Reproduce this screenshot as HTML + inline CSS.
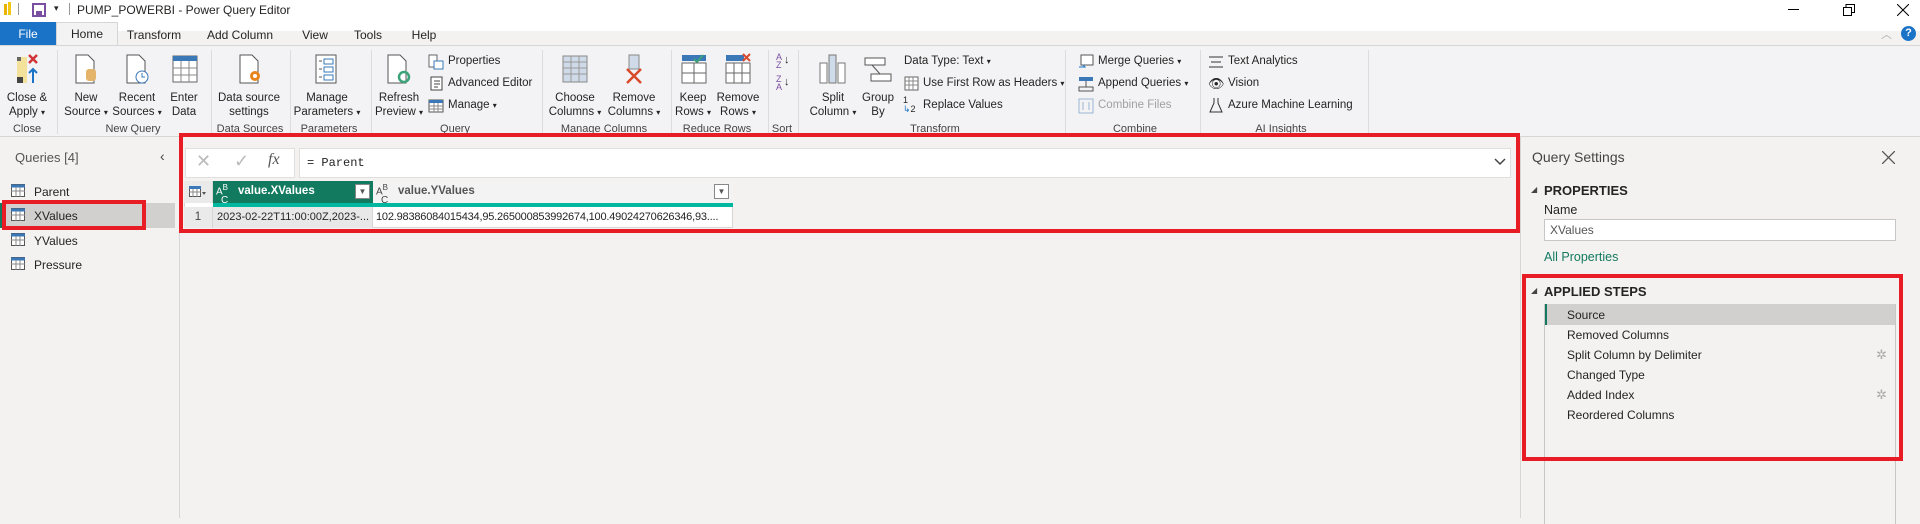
<!DOCTYPE html>
<html><head><meta charset="utf-8"><style>
*{margin:0;padding:0;box-sizing:border-box}
body{width:1920px;height:518px;overflow:hidden;background:#f3f2f1;font-family:"Liberation Sans",sans-serif;font-size:11.5px;color:#252423;position:relative}
.a{position:absolute;white-space:nowrap}
.c{position:absolute;white-space:nowrap;transform:translateX(-50%);text-align:center;line-height:12px}
.gl{position:absolute;top:123px;transform:translateX(-50%);white-space:nowrap;color:#444;font-size:11px}
.sep{position:absolute;top:50px;width:1px;height:84px;background:#dcdcdc}
.red{position:absolute;border:4px solid #e81c24}
.dd{font-size:8px}
.ico{position:absolute}
</style></head><body>
<div class="a" style="left:0;top:0;width:1920px;height:31px;background:#fff"></div>
<div class="a" style="left:4px;top:4px;width:3px;height:11px;background:#e8b400"></div>
<div class="a" style="left:8px;top:2px;width:3px;height:13px;background:#f2c811"></div>
<div class="a" style="left:18px;top:3px;width:1px;height:12px;background:#999"></div>
<svg class="ico" style="left:32px;top:3px" width="14" height="14"><rect x="1" y="1" width="12" height="12" fill="none" stroke="#7a4ea0" stroke-width="2"/><rect x="4" y="8" width="6" height="5" fill="#7a4ea0"/></svg>
<div class="a" style="left:54px;top:3px;font-size:9px">▾</div>
<div class="a" style="left:69px;top:3px;width:1px;height:12px;background:#999"></div>
<div class="a" style="left:77px;top:3px;font-size:12px">PUMP_POWERBI - Power Query Editor</div>
<div class="a" style="left:1788px;top:9px;width:11px;height:1px;background:#000"></div>
<svg class="ico" style="left:1843px;top:4px" width="12" height="12"><rect x="0.5" y="3.5" width="8" height="8" fill="none" stroke="#000"/><path d="M3 3.5V0.5H11.5V8.5H8.5" fill="none" stroke="#000"/></svg>
<svg class="ico" style="left:1897px;top:4px" width="12" height="12"><path d="M0 0L12 12M12 0L0 12" stroke="#000"/></svg>
<div class="a" style="left:0;top:22px;width:56px;height:24px;background:#1a73c6;color:#fff;text-align:center;line-height:24px;font-size:12px">File</div>
<div class="a" style="left:56px;top:22px;width:62px;height:24px;background:#f3f3f3;border:1px solid #d6d6d6;border-bottom:none;text-align:center;line-height:22px;font-size:12px">Home</div>
<div class="c" style="left:154px;top:29px;font-size:12px">Transform</div>
<div class="c" style="left:240px;top:29px;font-size:12px">Add Column</div>
<div class="c" style="left:315px;top:29px;font-size:12px">View</div>
<div class="c" style="left:368px;top:29px;font-size:12px">Tools</div>
<div class="c" style="left:424px;top:29px;font-size:12px">Help</div>
<div class="a" style="left:1881px;top:26px;color:#aaa;font-size:11px">︿</div>
<div class="a" style="left:1901px;top:26px;width:15px;height:15px;border-radius:50%;background:#1a73c6;color:#fff;font-size:11px;font-weight:bold;text-align:center;line-height:15px">?</div>
<div class="a" style="left:0;top:45px;width:1920px;height:92px;background:#f3f3f5;border-top:1px solid #d6d6d6;border-bottom:1px solid #d6d6d6"></div>
<div class="sep" style="left:57px"></div><div class="sep" style="left:211px"></div><div class="sep" style="left:290px"></div><div class="sep" style="left:371px"></div><div class="sep" style="left:542px"></div><div class="sep" style="left:671px"></div><div class="sep" style="left:768px"></div><div class="sep" style="left:798px"></div><div class="sep" style="left:1065px"></div><div class="sep" style="left:1200px"></div><div class="sep" style="left:1368px"></div>
<svg class="ico" style="left:15px;top:53px" width="26" height="32"><rect x="2" y="4" width="10" height="26" fill="#f5e29a"/><rect x="2" y="4" width="4" height="4" fill="#666"/><rect x="2" y="24" width="6" height="6" fill="#444"/><path d="M14 2l8 8M22 2l-8 8" stroke="#d13438" stroke-width="2.5"/><path d="M18 30V16M14 20l4-4 4 4" stroke="#1a73c6" stroke-width="2" fill="none"/></svg>
<svg class="ico" style="left:74px;top:53px" width="26" height="32"><path d="M2 2h12l6 6v22H2z" fill="#fff" stroke="#555"/><rect x="12" y="16" width="10" height="12" rx="3" fill="#e3b469"/></svg>
<svg class="ico" style="left:125px;top:53px" width="26" height="32"><path d="M2 2h12l6 6v22H2z" fill="#fff" stroke="#555"/><circle cx="17" cy="24" r="6" fill="#fff" stroke="#3a78b8"/><path d="M17 20v4h3" stroke="#3a78b8" fill="none"/></svg>
<svg class="ico" style="left:172px;top:55px" width="26" height="28"><rect x="1" y="1" width="24" height="26" fill="#fff" stroke="#666"/><rect x="1" y="1" width="24" height="5" fill="#3a78b8"/><path d="M1 13h24M1 20h24M9 6v21M17 6v21" stroke="#888"/></svg>
<svg class="ico" style="left:238px;top:53px" width="26" height="32"><path d="M2 2h12l6 6v22H2z" fill="#fff" stroke="#555"/><circle cx="17" cy="23" r="5" fill="#e8841c"/><circle cx="17" cy="23" r="2" fill="#fff"/></svg>
<svg class="ico" style="left:314px;top:53px" width="26" height="32"><rect x="2" y="2" width="20" height="28" fill="#fff" stroke="#555"/><rect x="10" y="6" width="9" height="5" fill="none" stroke="#3a78b8"/><rect x="10" y="14" width="9" height="5" fill="none" stroke="#3a78b8"/><rect x="10" y="22" width="9" height="5" fill="none" stroke="#3a78b8"/><path d="M5 8h3M5 16h3M5 24h3" stroke="#555"/></svg>
<svg class="ico" style="left:386px;top:53px" width="26" height="32"><path d="M2 2h12l6 6v22H2z" fill="#fff" stroke="#555"/><circle cx="18" cy="24" r="5" fill="none" stroke="#3aa37a" stroke-width="2.5"/></svg>
<svg class="ico" style="left:562px;top:55px" width="26" height="28"><rect x="1" y="1" width="24" height="26" fill="#cfdbe8" stroke="#888"/><path d="M1 7h24M1 13h24M1 19h24M9 1v26M17 1v26" stroke="#999"/></svg>
<svg class="ico" style="left:621px;top:53px" width="26" height="32"><rect x="8" y="2" width="10" height="14" fill="#cfdbe8" stroke="#888"/><path d="M6 16l14 14M20 16L6 30" stroke="#d84a2b" stroke-width="2.5"/></svg>
<svg class="ico" style="left:680px;top:53px" width="28" height="32"><rect x="2" y="2" width="24" height="6" fill="#3a78b8"/><path d="M14 6l3 3 6-7" stroke="#3aa37a" stroke-width="2" fill="none"/><rect x="2" y="10" width="24" height="20" fill="#fff" stroke="#666"/><path d="M2 20h24M14 10v20" stroke="#666"/></svg>
<svg class="ico" style="left:724px;top:53px" width="28" height="32"><rect x="2" y="2" width="18" height="6" fill="#3a78b8"/><path d="M19 1l7 7M26 1l-7 7" stroke="#d84a2b" stroke-width="2"/><rect x="2" y="10" width="24" height="20" fill="#fff" stroke="#666"/><path d="M2 20h24M10 10v20M18 10v20" stroke="#666"/></svg>
<div class="a" style="left:776px;top:53px;font-size:9px;line-height:8px;color:#7a4ea0">A<br>Z</div><div class="a" style="left:784px;top:54px;font-size:11px">↓</div>
<div class="a" style="left:776px;top:75px;font-size:9px;line-height:8px;color:#7a4ea0">Z<br>A</div><div class="a" style="left:784px;top:76px;font-size:11px">↓</div>
<svg class="ico" style="left:818px;top:53px" width="30" height="32"><rect x="2" y="10" width="7" height="20" fill="#fff" stroke="#777"/><rect x="11" y="2" width="7" height="28" fill="#cfdbe8" stroke="#777"/><rect x="20" y="10" width="7" height="20" fill="#fff" stroke="#777"/></svg>
<svg class="ico" style="left:864px;top:57px" width="28" height="28"><rect x="1" y="1" width="20" height="7" fill="#fff" stroke="#555"/><rect x="7" y="17" width="20" height="7" fill="#fff" stroke="#555"/><path d="M8 8l8 9" stroke="#555"/></svg>
<div class="c" style="left:27px;top:91px;line-height:14px">Close &amp;<br>Apply <span class="dd">▾</span></div>
<div class="c" style="left:86px;top:91px;line-height:14px">New<br>Source <span class="dd">▾</span></div>
<div class="c" style="left:137px;top:91px;line-height:14px">Recent<br>Sources <span class="dd">▾</span></div>
<div class="c" style="left:184px;top:91px;line-height:14px">Enter<br>Data</div>
<div class="c" style="left:249px;top:91px;line-height:14px">Data source<br>settings</div>
<div class="c" style="left:327px;top:91px;line-height:14px">Manage<br>Parameters <span class="dd">▾</span></div>
<div class="c" style="left:399px;top:91px;line-height:14px">Refresh<br>Preview <span class="dd">▾</span></div>
<div class="c" style="left:575px;top:91px;line-height:14px">Choose<br>Columns <span class="dd">▾</span></div>
<div class="c" style="left:634px;top:91px;line-height:14px">Remove<br>Columns <span class="dd">▾</span></div>
<div class="c" style="left:693px;top:91px;line-height:14px">Keep<br>Rows <span class="dd">▾</span></div>
<div class="c" style="left:738px;top:91px;line-height:14px">Remove<br>Rows <span class="dd">▾</span></div>
<div class="c" style="left:833px;top:91px;line-height:14px">Split<br>Column <span class="dd">▾</span></div>
<div class="c" style="left:878px;top:91px;line-height:14px">Group<br>By</div>
<svg class="ico" style="left:428px;top:54px" width="16" height="16"><rect x="1" y="1" width="8" height="12" fill="#fff" stroke="#666"/><rect x="6" y="7" width="9" height="8" fill="#fff" stroke="#3a78b8"/></svg>
<div class="a" style="left:448px;top:55px">Properties</div>
<svg class="ico" style="left:428px;top:76px" width="16" height="16"><rect x="3" y="1" width="11" height="13" fill="#fff" stroke="#444"/><path d="M6 5h6M6 8h6M6 11h4" stroke="#444"/></svg>
<div class="a" style="left:448px;top:77px">Advanced Editor</div>
<svg class="ico" style="left:428px;top:98px" width="16" height="16"><rect x="1" y="2" width="14" height="12" fill="#fff" stroke="#555"/><rect x="1" y="2" width="14" height="3" fill="#3a78b8"/><path d="M1 8h14M1 11h14M6 5v9M10 5v9" stroke="#888"/></svg>
<div class="a" style="left:448px;top:99px">Manage <span class="dd">▾</span></div>
<div class="a" style="left:904px;top:55px">Data Type: Text <span class="dd">▾</span></div>
<svg class="ico" style="left:904px;top:76px" width="15" height="15"><rect x="1" y="1" width="13" height="13" fill="#fff" stroke="#666"/><path d="M1 5h13M1 9h13M5 1v13M9 1v13" stroke="#888"/></svg>
<div class="a" style="left:923px;top:77px">Use First Row as Headers <span class="dd">▾</span></div>
<div class="a" style="left:903px;top:96px;font-size:9px;line-height:9px">1<br><span style="color:#1a73c6">↳</span>2</div>
<div class="a" style="left:923px;top:99px">Replace Values</div>
<svg class="ico" style="left:1078px;top:54px" width="16" height="16"><rect x="3" y="1" width="12" height="10" fill="#fff" stroke="#555"/><path d="M1 13h6l-2-2" stroke="#1a73c6" fill="none"/></svg>
<div class="a" style="left:1098px;top:55px">Merge Queries <span class="dd">▾</span></div>
<svg class="ico" style="left:1078px;top:76px" width="16" height="16"><rect x="1" y="1" width="14" height="4" fill="#3a78b8"/><rect x="1" y="11" width="14" height="4" fill="none" stroke="#555"/><path d="M8 5v6" stroke="#555"/></svg>
<div class="a" style="left:1098px;top:77px">Append Queries <span class="dd">▾</span></div>
<svg class="ico" style="left:1078px;top:98px" width="16" height="16"><rect x="1" y="1" width="14" height="14" fill="none" stroke="#9bb6d1"/><path d="M5 4v8M11 4v8" stroke="#9bb6d1"/></svg>
<div class="a" style="left:1098px;top:99px;color:#a0a0a0">Combine Files</div>
<svg class="ico" style="left:1209px;top:55px" width="14" height="14"><path d="M0 2h14M2 7h10M0 12h14" stroke="#333"/></svg>
<div class="a" style="left:1228px;top:55px">Text Analytics</div>
<div class="a" style="left:1208px;top:76px;font-size:13px">👁</div>
<div class="a" style="left:1228px;top:77px">Vision</div>
<svg class="ico" style="left:1209px;top:97px" width="14" height="16"><path d="M5 1v5L1 15h12L9 6V1" fill="none" stroke="#333"/></svg>
<div class="a" style="left:1228px;top:99px">Azure Machine Learning</div>
<div class="gl" style="left:27px">Close</div><div class="gl" style="left:133px">New Query</div><div class="gl" style="left:250px">Data Sources</div><div class="gl" style="left:329px">Parameters</div><div class="gl" style="left:455px">Query</div><div class="gl" style="left:604px">Manage Columns</div><div class="gl" style="left:717px">Reduce Rows</div><div class="gl" style="left:782px">Sort</div><div class="gl" style="left:935px">Transform</div><div class="gl" style="left:1135px">Combine</div><div class="gl" style="left:1281px">AI Insights</div>
<div class="a" style="left:179px;top:137px;width:1px;height:381px;background:#d6d6d6"></div>
<div class="a" style="left:15px;top:150px;font-size:13px;color:#555">Queries [4]</div>
<div class="a" style="left:160px;top:148px;font-size:14px;color:#444">‹</div>
<div class="a" style="left:0;top:203px;width:175px;height:25px;background:#d2d0ce;border-left:2px solid #137a5f"></div>
<div class="a" style="left:34px;top:185px;font-size:12px">Parent</div>
<div class="a" style="left:34px;top:209px;font-size:12px">XValues</div>
<div class="a" style="left:34px;top:234px;font-size:12px">YValues</div>
<div class="a" style="left:34px;top:258px;font-size:12px">Pressure</div>
<svg class="ico" style="left:11px;top:184px" width="14" height="90"><g fill="#fff" stroke="#555"><rect x="0.5" y="0.5" width="13" height="12"/><rect x="0.5" y="24.5" width="13" height="12"/><rect x="0.5" y="49.5" width="13" height="12"/><rect x="0.5" y="73.5" width="13" height="12"/></g><g stroke="#3a78b8" stroke-width="3"><path d="M0 2h14M0 26h14M0 51h14M0 75h14"/></g><g stroke="#888"><path d="M0 7h14M5 3v10M9 3v10M0 31h14M5 27v10M9 27v10M0 56h14M5 52v10M9 52v10M0 80h14M5 76v10M9 76v10"/></g></svg>
<div class="red" style="left:2px;top:200px;width:144px;height:30px"></div>
<div class="a" style="left:185px;top:148px;width:110px;height:30px;background:#fff;border:1px solid #e1dfdd"></div>
<div class="a" style="left:196px;top:151px;font-size:18px;color:#bbb">✕</div>
<div class="a" style="left:234px;top:151px;font-size:18px;color:#bbb">✓</div>
<div class="a" style="left:268px;top:151px;font-family:'Liberation Serif',serif;font-style:italic;font-size:16px;color:#555">fx</div>
<div class="a" style="left:299px;top:148px;width:1212px;height:30px;background:#fff;border:1px solid #e1dfdd"></div>
<div class="a" style="left:307px;top:156px;font-family:'Liberation Mono',monospace;font-size:12px">= Parent</div>
<svg class="ico" style="left:1494px;top:158px" width="12" height="8"><path d="M1 1l5 5 5-5" stroke="#444" fill="none" stroke-width="1.5"/></svg>
<div class="a" style="left:184px;top:181px;width:549px;height:47px;background:#fff;border:1px solid #d6d6d6"></div>
<div class="a" style="left:184px;top:181px;width:29px;height:22px;background:#eaeaea;border-right:1px solid #d6d6d6"></div>
<svg class="ico" style="left:189px;top:186px" width="18" height="12"><rect x="0.5" y="0.5" width="11" height="10" fill="#fff" stroke="#555"/><rect x="0" y="0" width="12" height="3" fill="#3a78b8"/><path d="M0 6h12M4 3v8M8 3v8" stroke="#888"/><path d="M13 6h4l-2 3z" fill="#555"/></svg>
<div class="a" style="left:213px;top:181px;width:160px;height:22px;background:#127a5f"></div>
<div class="a" style="left:216px;top:183px;color:#fff;font-size:10px;line-height:9px">A<sup style="font-size:8px">B</sup><br><span style="margin-left:5px">C</span></div>
<div class="a" style="left:238px;top:185px;color:#fff;font-weight:bold;font-size:11.5px">value.XValues</div>
<div class="a" style="left:355px;top:184px;width:15px;height:15px;background:#fff;border:1px solid #888;font-size:8px;text-align:center;line-height:14px;color:#555">▼</div>
<div class="a" style="left:373px;top:181px;width:360px;height:22px;background:#f3f3f3"></div>
<div class="a" style="left:376px;top:183px;color:#444;font-size:10px;line-height:9px">A<sup style="font-size:8px">B</sup><br><span style="margin-left:5px">C</span></div>
<div class="a" style="left:398px;top:185px;color:#555;font-weight:bold;font-size:11.5px">value.YValues</div>
<div class="a" style="left:714px;top:184px;width:15px;height:15px;background:#fff;border:1px solid #888;font-size:8px;text-align:center;line-height:14px;color:#555">▼</div>
<div class="a" style="left:213px;top:203px;width:520px;height:4px;background:#00b7a0"></div>
<div class="a" style="left:184px;top:207px;width:29px;height:21px;background:#eaeaea;border-right:1px solid #d6d6d6;text-align:center;line-height:21px;color:#444">1</div>
<div class="a" style="left:213px;top:207px;width:160px;height:21px;background:#e8e8e8;border-right:1px solid #d6d6d6;padding-left:4px;line-height:21px;font-size:11px;overflow:hidden">2023-02-22T11:00:00Z,2023-...</div>
<div class="a" style="left:376px;top:207px;width:356px;line-height:21px;font-size:11px;overflow:hidden;letter-spacing:-0.2px">102.98386084015434,95.265000853992674,100.49024270626346,93....</div>
<div class="red" style="left:179px;top:133px;width:1341px;height:100px"></div>
<div class="a" style="left:1520px;top:137px;width:1px;height:381px;background:#d6d6d6"></div>
<div class="a" style="left:1532px;top:149px;font-size:14px;color:#444">Query Settings</div>
<svg class="ico" style="left:1882px;top:151px" width="13" height="13"><path d="M0 0L13 13M13 0L0 13" stroke="#555" stroke-width="1.3"/></svg>
<div class="a" style="left:1531px;top:185px;font-size:8px;color:#444">◢</div>
<div class="a" style="left:1544px;top:183px;font-weight:bold;font-size:13px">PROPERTIES</div>
<div class="a" style="left:1544px;top:203px;font-size:12.5px">Name</div>
<div class="a" style="left:1544px;top:219px;width:352px;height:22px;background:#fff;border:1px solid #c8c6c4;padding-left:5px;line-height:20px;color:#555;font-size:12px">XValues</div>
<div class="a" style="left:1544px;top:250px;color:#137a5f;font-size:12.5px">All Properties</div>
<div class="a" style="left:1531px;top:286px;font-size:8px;color:#444">◢</div>
<div class="a" style="left:1544px;top:284px;font-weight:bold;font-size:13px">APPLIED STEPS</div>
<div class="a" style="left:1544px;top:304px;width:352px;height:220px;border:1px solid #c8c6c4;border-bottom:none"></div>
<div class="a" style="left:1545px;top:304px;width:350px;height:21px;background:#d2d0ce;border-left:2px solid #137a5f"></div>
<div class="a" style="left:1567px;top:308px;font-size:12px">Source</div>
<div class="a" style="left:1567px;top:328px;font-size:12px">Removed Columns</div>
<div class="a" style="left:1567px;top:348px;font-size:12px">Split Column by Delimiter</div>
<div class="a" style="left:1567px;top:368px;font-size:12px">Changed Type</div>
<div class="a" style="left:1567px;top:388px;font-size:12px">Added Index</div>
<div class="a" style="left:1567px;top:408px;font-size:12px">Reordered Columns</div>
<div class="a" style="left:1876px;top:347px;color:#aaa;font-size:13px">✲</div>
<div class="a" style="left:1876px;top:387px;color:#aaa;font-size:13px">✲</div>
<div class="red" style="left:1522px;top:274px;width:381px;height:187px"></div>
</body></html>
